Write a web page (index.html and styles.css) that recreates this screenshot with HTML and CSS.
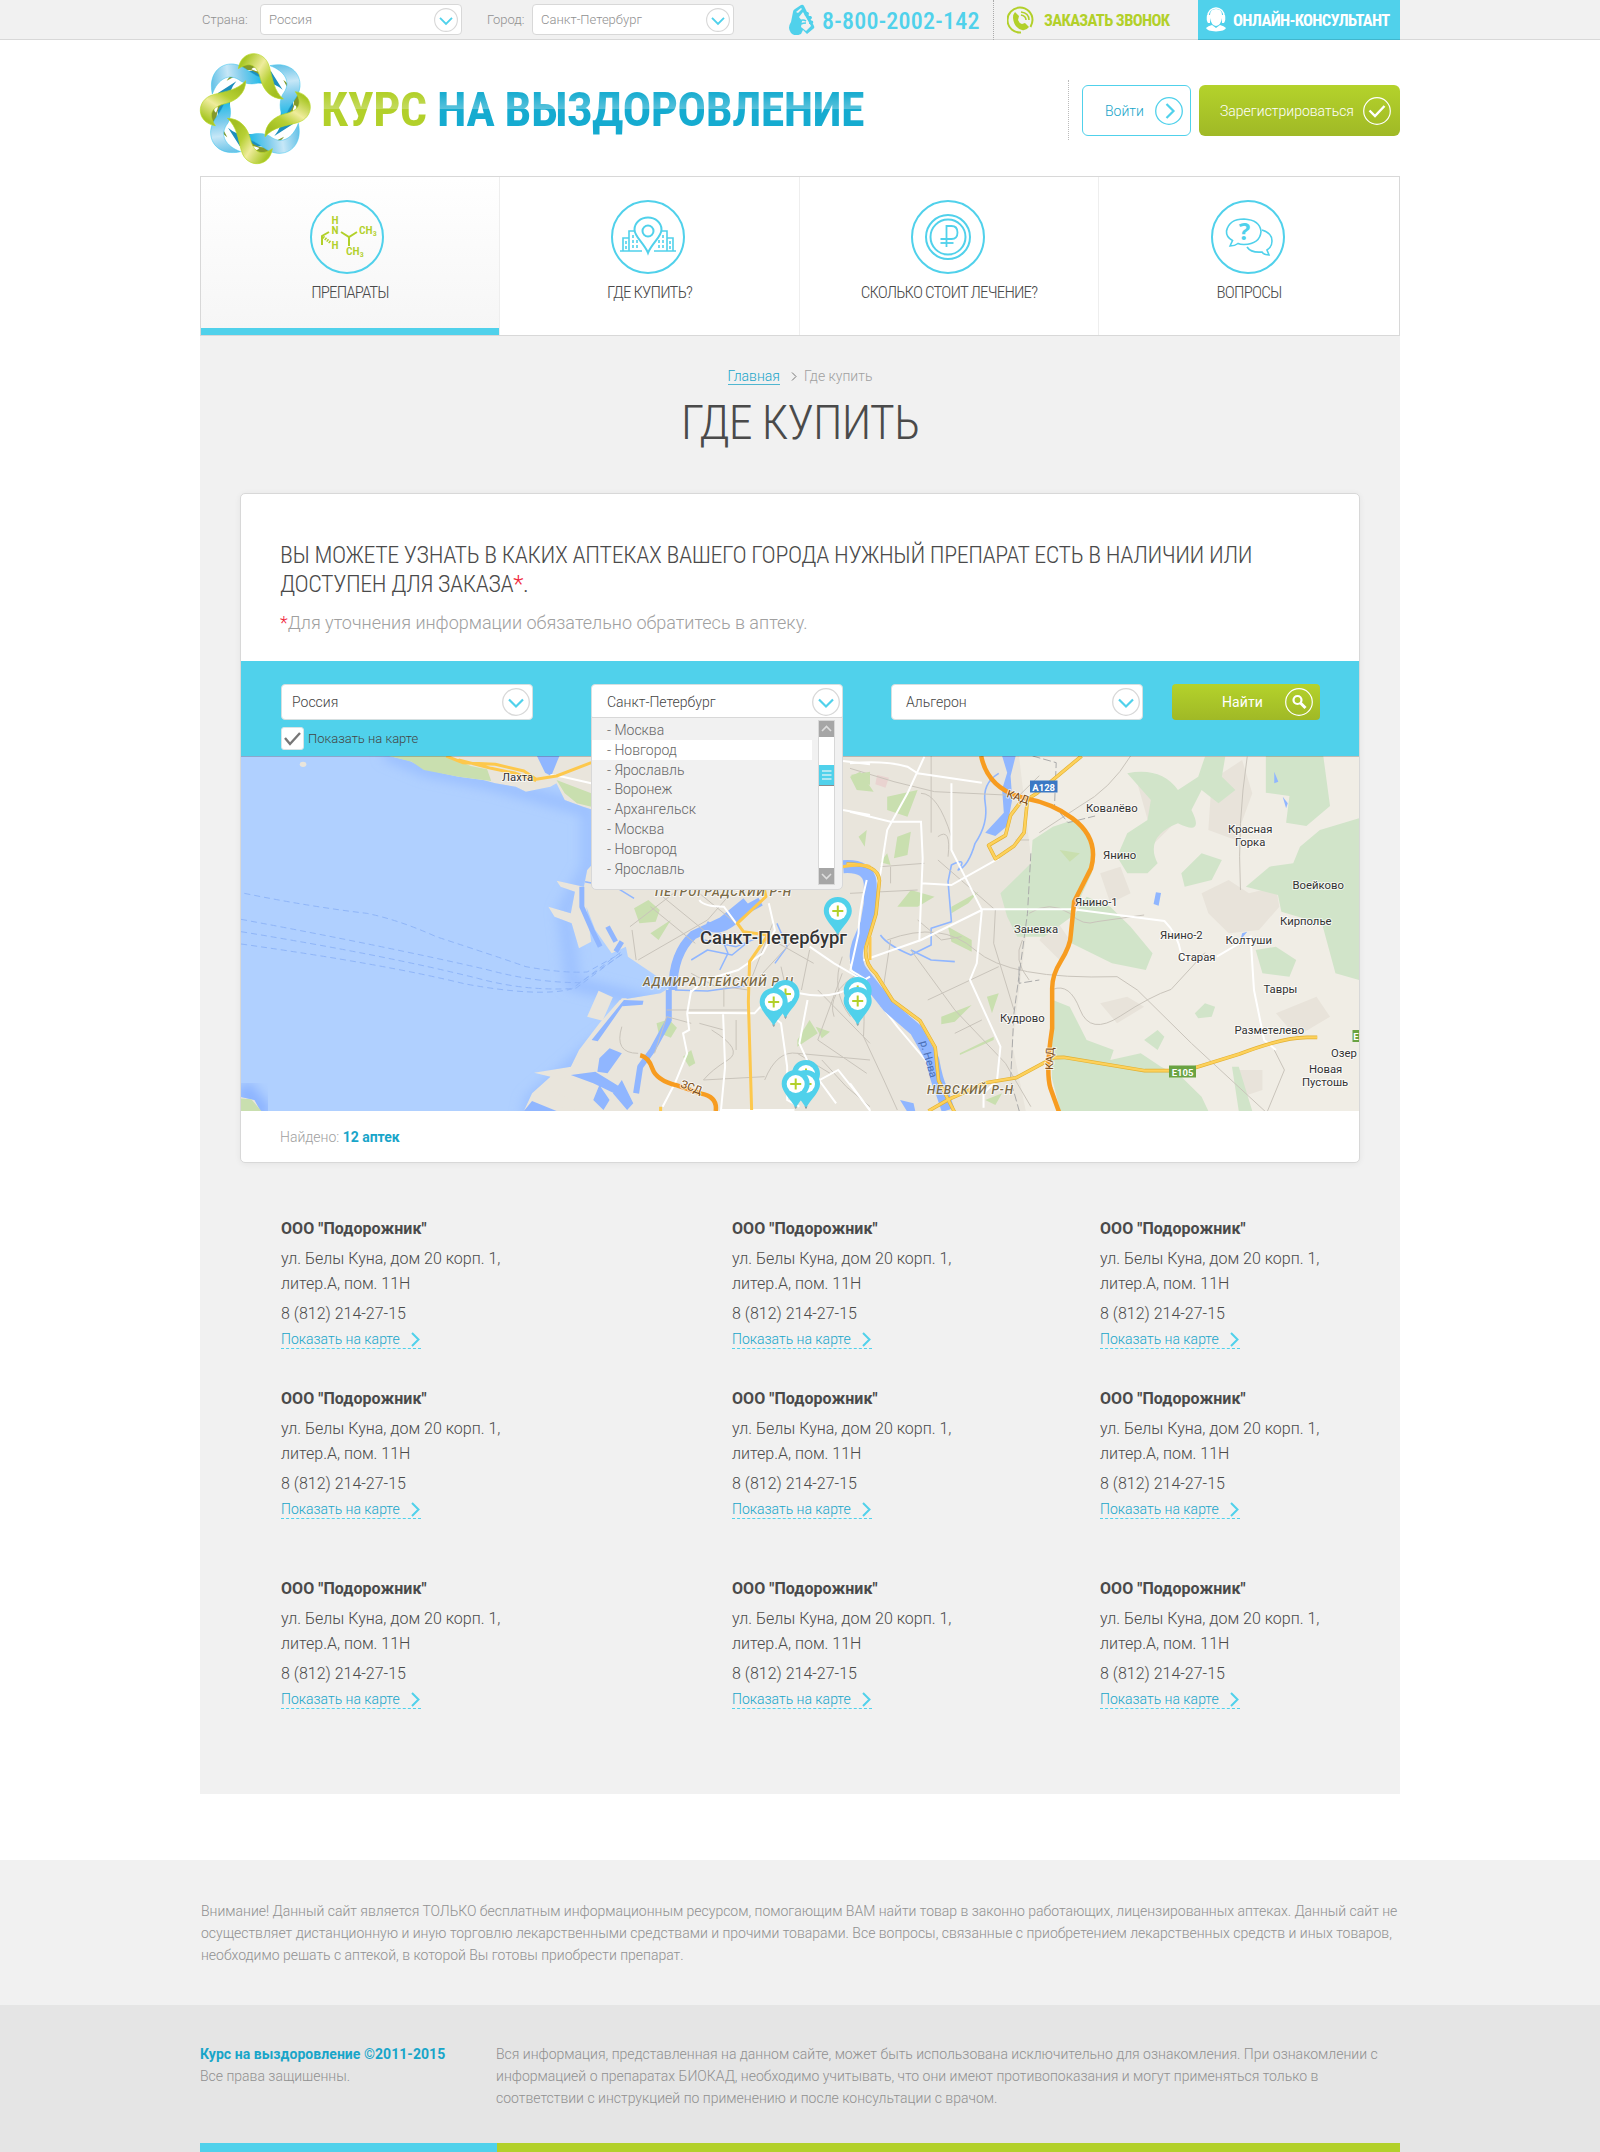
FILE: index.html
```html
<!DOCTYPE html>
<html lang="ru">
<head>
<meta charset="utf-8">
<title>Где купить — Курс на выздоровление</title>
<link rel="stylesheet" href="styles.css">
</head>
<body>
<svg class="defs" width="0" height="0" aria-hidden="true">
  <defs>
    <symbol id="i-down" viewBox="0 0 28 28"><circle cx="14" cy="14" r="13.3" fill="#fff" stroke="#d8d8d8" stroke-width="1.3"/><path d="M7 11.5l7 7 7-7" fill="none" stroke="#50d1eb" stroke-width="2.2"/></symbol>
    <symbol id="i-next" viewBox="0 0 9 15"><path d="M1 1l6.5 6.5L1 14" fill="none" stroke="#50d1eb" stroke-width="2"/></symbol>
    <symbol id="pin" viewBox="0 0 30 40" overflow="visible"><path d="M15 1C7 1 1 7 1 15c0 8 9 15 14 24 5-9 14-16 14-24C29 7 23 1 15 1z" fill="#50d1eb"/><path d="M14 37.500l1 2 1-2" fill="none" stroke="#8a9ea3"/><circle cx="15" cy="15" r="9" fill="#fff"/><path d="M9.500 15h11M15 9.500v11" stroke="#b2d02a" stroke-width="2"/></symbol>
  </defs>
</svg>

<header class="topbar">
  <div class="wrap topbar-row">
    <span class="top-label country">Страна:</span>
    <div class="top-select"><span>Россия</span><svg width="24" height="24"><use href="#i-down"/></svg></div>
    <span class="top-label city">Город:</span>
    <div class="top-select"><span>Санкт-Петербург</span><svg width="24" height="24"><use href="#i-down"/></svg></div>
    <a class="phone"><svg width="28" height="31" viewBox="0 0 28 31"><path d="M6 8q0-2 2-3l6-4q2-1 3 1l10 20q1 2-1 3l-6 5-4-4-2 4q-6 3-10-1-4-5 0-11z" fill="#50d1eb"/><path d="M9 8l5-4 1 1-4 4zM16 8l8 14-5 5-5-4 1-6-3-4z" fill="#f1f1f1"/><path d="M17 8l4 0q2 2 0 3l-3 1M20 12l4 0q2 2 0 3l-3 1M22 16l4 1q1 2-1 3l-3 0" fill="#50d1eb"/><path d="M13 17q3-2 6 0M14 20q2-1 5-1" fill="none" stroke="#50d1eb" stroke-width="1.600"/></svg><span>8-800-2002-142</span></a>
    <a class="callback"><svg width="27" height="28" viewBox="0 0 27 28"><path d="M14 26.500A12.500 12.500 0 1 1 25.500 14q0 3-2 7" fill="none" stroke="#b2d02a" stroke-width="2"/><path d="M8 6l4 4-1 4q1 3 4 4l3-1 4 4q-3 4-7 3Q7 22 6 12q0-4 2-6z" fill="#b2d02a"/><path d="M14 9q5 1 5 5M14 6q8 1 8 8" fill="none" stroke="#b2d02a" stroke-width="1.600"/></svg><span>ЗАКАЗАТЬ ЗВОНОК</span></a>
    <a class="online"><svg width="20" height="25" viewBox="0 0 20 25"><path d="M2 11V9a8 8 0 0 1 16 0v2" fill="none" stroke="#fff" stroke-width="1.500"/><path d="M4 8q0-6 6-6t6 6v3q-1 7-6 8-5-1-6-8z" fill="#fff"/><path d="M1 8h3v8H2q-2-3-1-8zM16 8h3q1 5-1 8h-2zM0 21q2-2 6-3l4 3 4-3q4 1 6 3-1 3-10 3.500Q1 24 0 21z" fill="#fff"/></svg><span>ОНЛАЙН-КОНСУЛЬТАНТ</span></a>
  </div>
</header>

<div class="wrap brand-row">
  <svg class="logo" width="120" height="120" viewBox="0 0 360 360">
    <defs>
      <linearGradient id="gl" gradientUnits="userSpaceOnUse" x1="130" y1="60" x2="240" y2="130"><stop offset="0" stop-color="#a9c726"/><stop offset=".4" stop-color="#efec9c"/><stop offset=".7" stop-color="#b7d034"/><stop offset="1" stop-color="#a3bf22"/></linearGradient>
      <linearGradient id="bl" gradientUnits="userSpaceOnUse" x1="50" y1="110" x2="190" y2="90"><stop offset="0" stop-color="#6cc4e8"/><stop offset=".35" stop-color="#c6e7f7"/><stop offset=".65" stop-color="#7dcbec"/><stop offset="1" stop-color="#2bbce8"/></linearGradient>
      <g id="dk"><path d="M150 70q35-4 75 0l35 55q-30-25-55-18-30-2-60-10z" fill="#1d8fbd"/><path d="M92 98q20-30 45-50 30-14 50 18l5 15q-40-30-68 0z" fill="#83992b"/><path d="M166 64q10-14 24 6-12 0-24-6z" fill="#fff"/><path d="M83 92q8-12 24-10-10 10-24 18z" fill="#fff"/></g>
      <path id="bu" d="M49 138C36 80 70 45 112 48 150 52 165 85 211 94 185 114 145 110 128 95 98 76 66 92 49 138z" fill="url(#bl)" stroke="#35c2ec" stroke-width="1.500"/>
      <path id="gu" d="M127 62C135 4 205 2 220 56 230 92 233 128 262 153 225 153 203 127 194 95 183 48 160 40 127 62z" fill="url(#gl)" stroke="#b6d822" stroke-width="2"/>
    </defs>
    <use href="#dk"/><use href="#dk" transform="rotate(90 178 182)"/><use href="#dk" transform="rotate(180 178 182)"/><use href="#dk" transform="rotate(270 178 182)"/>
    <use href="#bu"/><use href="#bu" transform="rotate(90 178 182)"/><use href="#bu" transform="rotate(180 178 182)"/><use href="#bu" transform="rotate(270 178 182)"/>
    <use href="#gu"/><use href="#gu" transform="rotate(90 178 182)"/><use href="#gu" transform="rotate(180 178 182)"/><use href="#gu" transform="rotate(270 178 182)"/>
  </svg>
  <div class="brand"><span class="brand-a">КУРС</span> <span class="brand-b">НА ВЫЗДОРОВЛЕНИЕ</span></div>
  <div class="auth">
    <a class="login"><span>Войти</span><svg width="28" height="28" viewBox="0 0 28 28"><circle cx="14" cy="14" r="13.300" fill="none" stroke="#50d1eb" stroke-width="1.300"/><path d="M11.500 7l7 7-7 7" fill="none" stroke="#50d1eb" stroke-width="2.200"/></svg></a>
    <a class="register"><span>Зарегистрироваться</span><svg width="28" height="28" viewBox="0 0 28 28"><circle cx="14" cy="14" r="13.300" fill="none" stroke="#fff" stroke-width="1.200"/><path d="M6.500 13.500l5.500 5.500 9.500-10" fill="none" stroke="#fff" stroke-width="2.400"/></svg></a>
  </div>
</div>

<nav class="wrap nav">
  <a class="nav-item active">
    <svg width="74" height="74" viewBox="0 0 74 74"><circle cx="37" cy="37" r="36" fill="none" stroke="#50d1eb" stroke-width="2"/><g stroke="#b2d02a" fill="none" stroke-width="2"><path d="M12 45V36l7-4M31 32l8 5 8-5M39 37v9"/><path d="M13 37l8 6" stroke-width="3" stroke-dasharray="1.500 1"/></g><g class="mol"><text x="21.500" y="24">H</text><text x="21.500" y="34">N</text><text x="21.500" y="49">H</text><text x="49" y="34">CH<tspan class="sub" dy="1.500">3</tspan></text><text x="36" y="55">CH<tspan class="sub" dy="1.500">3</tspan></text></g></svg>
    <span>ПРЕПАРАТЫ</span>
  </a>
  <a class="nav-item">
    <svg width="74" height="74" viewBox="0 0 74 74"><g fill="none" stroke="#50d1eb"><circle cx="37" cy="37" r="36" stroke-width="2"/><g stroke-width="1.600"><path d="M9 51h22M43 51h22M12 51V38h6v-7h6M18 38v13M62 51V38h-6v-7h-6M56 38v13"/><path d="M15 41v8M22 35v14M26 40v9M52 35v14M48 40v9M59 41v8" stroke-dasharray="3 2"/></g><path d="M37 53C33 43 23.500 37 23.500 29.500a13.500 12 0 0 1 27 0C50.500 37 41 43 37 53z" fill="#fff" stroke-width="2"/><circle cx="37" cy="31" r="5.500" stroke-width="2"/></g></svg>
    <span>ГДЕ КУПИТЬ?</span>
  </a>
  <a class="nav-item">
    <svg width="74" height="74" viewBox="0 0 74 74"><g fill="none" stroke="#50d1eb" stroke-width="2"><circle cx="37" cy="37" r="36"/><circle cx="37" cy="37" r="22"/><circle cx="37" cy="37" r="17.500"/><path d="M35.500 47V26h5q6 0 6 6.500t-6 6.500h-11" stroke-width="1.800"/><path d="M29.500 43h13" stroke-width="1.800"/></g></svg>
    <span>СКОЛЬКО СТОИТ ЛЕЧЕНИЕ?</span>
  </a>
  <a class="nav-item">
    <svg width="74" height="74" viewBox="0 0 74 74"><g fill="none" stroke="#50d1eb"><circle cx="37" cy="37" r="36" stroke-width="2"/><g stroke-width="1.600"><path d="M51 30q10 3 10 11 0 6-5 9l2 5q-5 0-7-3-11 1-15-5"/><path d="M19 46l2.500-5.500Q15 37 15.500 31 18 19 33 19q16 1 17 12.500Q49 44 33 44.500q-4 0-6-1-3 2.500-8 2.500z" fill="#fff"/></g></g><text class="qmark" x="33.500" y="40">?</text></svg>
    <span>ВОПРОСЫ</span>
  </a>
</nav>

<main class="wrap main">
  <div class="crumbs"><a>Главная</a><svg width="6" height="9" viewBox="0 0 6 9"><path d="M1 .5l4 4-4 4" fill="none" stroke="#777"/></svg><span>Где купить</span></div>
  <h1>ГДЕ КУПИТЬ</h1>

  <section class="panel">
    <div class="panel-head">
      <h2>ВЫ МОЖЕТЕ УЗНАТЬ В КАКИХ АПТЕКАХ ВАШЕГО ГОРОДА НУЖНЫЙ ПРЕПАРАТ ЕСТЬ В НАЛИЧИИ ИЛИ<br>ДОСТУПЕН ДЛЯ ЗАКАЗА<i>*</i>.</h2>
      <p><i>*</i>Для уточнения информации обязательно обратитесь в аптеку.</p>
    </div>
    <form class="filter">
      <div class="field f1">
        <div class="select"><span>Россия</span><svg width="28" height="28"><use href="#i-down"/></svg></div>
        <label class="check"><svg width="23" height="23" viewBox="0 0 23 23"><rect x=".5" y=".5" width="22" height="22" rx="2.500" fill="#fff" stroke="#d8e4e6"/><path d="M4 11l5 6L19 6" fill="none" stroke="#777" stroke-width="2.400"/></svg><span>Показать на карте</span></label>
      </div>
      <div class="field f2">
        <div class="select open"><span>Санкт-Петербург</span><svg width="28" height="28"><use href="#i-down"/></svg></div>
        <div class="dropdown">
          <ul><li>- Москва</li><li class="hover">- Новгород</li><li>- Ярославль</li><li>- Воронеж</li><li>- Архангельск</li><li>- Москва</li><li>- Новгород</li><li>- Ярославль</li></ul>
          <svg class="scroll" width="17" height="165" viewBox="0 0 17 165"><rect x=".5" y=".5" width="16" height="164" fill="#fff" stroke="#d8d8d8"/><path d="M1 1h15v16H1zM1 148h15v16H1z" fill="#a6a6a6"/><path d="M4 11l4.500-4.500L13 11M4 154l4.500 4.500L13 154" fill="none" stroke="#dedede" stroke-width="1.600"/><path d="M1 45h15v20H1z" fill="#50d1eb"/><path d="M1 65.500h15" stroke="#8b8b8b"/><path d="M4 51h9.500M4 55h9.500M4 59h9.500" stroke="#cdeef5" stroke-width="1.500"/></svg>
        </div>
      </div>
      <div class="field f3"><div class="select"><span>Альгерон</span><svg width="28" height="28"><use href="#i-down"/></svg></div></div>
      <a class="find"><span>Найти</span><svg width="28" height="28" viewBox="0 0 28 28"><circle cx="14" cy="14" r="13.300" fill="none" stroke="#fff" stroke-width="1.200"/><circle cx="12.500" cy="12" r="4" fill="none" stroke="#fff" stroke-width="2.200"/><path d="M15.500 15l5 5" stroke="#fff" stroke-width="3"/></svg></a>
    </form>

    <svg class="map" width="1118" height="355" viewBox="241 756 1118 355">
      <defs><filter id="soft" x="-10%" y="-10%" width="120%" height="120%"><feGaussianBlur stdDeviation="16"/></filter>
      <clipPath id="bay"><path d="M24 348H390l50 14 35 23 45 15 40 10 60 10 30 10 50 10 25 15 60-15 15-10 20 50 45 20 25 10v160l-15 20-8 50-67-18 10 18 35 15-10 65-55-20 15 30 42 20 18 75 30-20-12-105 22 70 40 70 35-20 5 30 60 50 45 40-25 20-100 20-50 70-50 80-20 50-90 18 40 12-45 50-20 53H75l-15-33-36-10z"/></clipPath></defs>
      <rect x="241" y="756" width="1118" height="355" fill="#e9e5dc"/>

      <!-- gulf and western shore -->
      <g class="ns" transform="translate(230 640) scale(.40816 .33333)">
        <g clip-path="url(#bay)"><rect y="340" width="1100" height="1080" fill="#b0d0ff"/>
          <path d="M380 340l100 50 160 40 240 80v170l-60 130 20 220 200 60-150 130-150 160-20 120" fill="none" stroke="#8bb3ff" stroke-width="14" stroke-opacity=".55" filter="url(#soft)"/>
          <path d="M27 1340l60 90" stroke="#8bb3ff" stroke-width="20" filter="url(#soft)"/></g>
        <path class="park" d="M390 348h140l60 30 40 10 10 35-80-13-85-20-30-25z"/>
        <path class="park" d="M800 420l85 40v40l-35-10-30-30zM24 1375l28 3 25 35H24zM990 805l35-25 28 30-10 35-40 5zM1045 1150l30-12 20 25-15 30-30-15z"/>
        <circle cx="179" cy="373" r="8" fill="#e9e5dc"/>
        <path d="M752 348h55l-20 60-15-10z" class="water"/>
        <!-- islands and docks -->
        <path class="land" d="M903 1052l35 20-25 70-38-12zM850 1255l110-180h12l-5 25-65 100-45 70-15-8zM960 1150l-30 60-35 55-12-5 60-110zM985 1230l-50 80-15-8 45-85zM795 1320l40-13 70 65-10 30-50-32zM785 1350l70 40 15 25-90-20z"/>
        <path class="water" d="M965 1080l48 2-2 12-50 5-60 105-15-4zM930 1225l30 15-35 60-25-5 5-40zM960 1320l28 70-15 20-35-50zM720 1413l20-30 60 30zM835 1305l60-10 80 60-25 10-60-35zM905 1335l25 45-15 30-25-30z"/>
        <path class="river" stroke-width="9" d="M1165 855q40 30 90-40l45-30M1085 1050q0-110 50-165l70-40 60-60"/>
        <path class="river" stroke-width="6" d="M1075 1050v90l-40 90-30 50-10 80"/>
        <path class="river" stroke-width="5" d="M925 860l20 45M862 740v60l25 70 20 50M960 905l-15 30"/>
        <path class="river" stroke-width="1.500" d="M1130 960l40-30 60 15 40-40M1160 900l80 20 60-30M1200 990l20-50-20-60M1090 1050l80 3 90-15M1340 850l25 70-30 50M870 725l80 20 40 30"/>
        <path class="ferry" d="M35 760q160 40 300 60 80 20 170 70 150 60 220 90 90 20 150 16l80-54M27 838q350 80 600 150 120 40 230 40l110-90M27 875q350 70 580 140 120 40 240 30l110-100M27 912q350 60 550 120 180 40 260 15l120-110"/>
      </g>

      <!-- city blocks, river bend -->
      <g class="ns" transform="translate(850 640) scale(.33806 .33333)">
        <path fill="#f0ede5" d="M500 348h1006v1065H520l-40-200 20-160 20-160 20-200z"/>
        <path class="block" d="M560 900l50-60 40 60-30 60zM1040 760l80-40 60 40 80-20 10 60-60 70-90 10-60-60zM1260 1120l120-50 40 60-100 60zM740 1090l80-20 50 30-80 50zM1140 1290h80v60l-60 20zM740 700l60-20 30 80-60 30zM1070 420l90-60 30 100-50 140-80-30zM850 430l100 60 10 60-60 60z"/>
        <path class="wood" d="M540 600l60-40 60-20 35 30 25 70-5 60-60 130-80 60h-80l-30-60-20-70 90-90zM820 400q100-20 150 50l60-40 20-60h60l-10 60 40 40-50 40-50-40-30 60q40 80-40 40-100 40-60 120l-30 30h-60l-30-50 30-70 60-40 10-60zM1230 348h170l20 150-70 60-60-10 10-80-70-10zM1390 570l116-35v350l-130-40-100-30-10-50-95-25 70-60 70-10 20-50zM980 700l60-60 60 20-30 60-80 20zM660 830l40-60 70 30 60 60 65 80-20 50-100-20-120-60zM600 1080l50 20 50 100 80 30-10 30 90-20 60 40 60 30 60 60 20 43H622l-25-100v-90zM870 1200l40-30 20 20-20 40zM1020 1120l30-30 30 10-10 30-40 5zM1130 1280h20l40 133h-40zM1200 930l60-10 60 40-20 50-80-10zM1380 790l126-30v260l-70-20z"/>
        <path class="park" d="M0 410l30-15 40 60-50-5zM110 470l90-20-30 80-60-20zM140 590l40-15-10 70-40 10zM180 750l70 20-50 30h-60zM290 860l70 40v35l-60-30zM300 800l80-45-30 35-50 30zM405 1070l35-10-20 60zM270 1130l90-35-50 50-40 8zM325 1240l100-50v10l-100 45zM400 1380l50-20-20 35zM110 640l10 35-30-8zM620 630l60 10-30 25z"/>
        <path fill="#e9d3d0" d="M80 405l35 8-10 30-30-10z"/>
        <path class="water" d="M450 348h40l-15 60 5 70-15 80-35 30-30-10 55-60-5-70 15-50zM905 757l15 2-7 38-15-5zM1255 395l12 30-12 5zM1280 470l15 20-5 15zM1160 880l15-5-20 25zM148 1380l40 10 5 23h-25zM1498 960l8 60z"/>
        <path class="river" stroke-width="1.600" d="M440 400q-50 30-40 90t-30 120q-20 70-50 80 30-40-20-15l-10 50 10 120-60 20v50l-60 30q-70-30-90-60M180 930l60 30 70 5"/>
        <g class="rd gray"><path d="M0 385l130 40 120 30 250 12 60-60M240 348v230M210 460q50 0 90 130M830 348q-60 100-150 150l-120 80M260 660l170 150-5 100 60 200M120 680v50M0 760l200-10M90 680l130-10M110 900q160-60 260 30t420 80l60 40 160 160 235 220M180 930l130 180 150 160 75 130M230 1080l210-100M200 840l70 60 60-10M0 1000q50 0 40 190l60 130 40 90M310 1180l80-40M120 900l-30 200M510 900q-30 60 20 120M530 820q60-40 120 0 40 40 80 25l140-20M1175 350q-30 200-20 400M490 600h40M260 590q40-30 30 60M600 1048q50-20 80 60t120 20 150-80l100-110M1255 1230l30 60-50 123"/></g>
        <g class="rd rail"><path d="M540 348l70 20-5 130 40 50 80-20M535 640l-10 180-40 300-10 200 55 200M500 980v50l60-10"/></g>
        <g class="rd white"><path d="M0 370q100-10 170 10l30 20 190 28M220 350l-50 110-60 110-20 130-20 60M0 515l120 30h90l5 110-10 250M300 430v200l40 80 50 100-15 160-20 50 90 200-10 100-40 40v43M210 730l90 5 140-80M390 808h270l270 35q40 40 50 100l20 20M1085 950l100-60 10 160 30 150 35 30M0 975l210-75 180-90M0 960l30 20M80 1080l60 80 100 120 30 120M0 1330l60 83"/></g>
        <path class="river" stroke-width="13" d="M-20 680q75-5 80 50v60l-10 60-25 60q-20 60 20 100l70 90 80 70 50 90q10 60 25 90l20 60"/>
        <g class="casing"><path stroke="#e2b030" stroke-width="3.600" d="M-10 672q95 0 97 50l-10 100-30 100q-5 50 30 80l50 80 80 60 45 80 10 100 50 100M232 1413l60-35 110-50 90-15 110-60 30-1 240 40h120l160-50q130-50 200-50h30M685 348l-130 110-30 20-10 100-30 40-55 38-20-40 50-30 15-60 30-40"/></g>
        <g class="casing"><path stroke="#fdd15b" stroke-width="2.400" d="M-10 672q95 0 97 50l-10 100-30 100q-5 50 30 80l50 80 80 60 45 80 10 100 50 100M232 1413l60-35 110-50 90-15 110-60 30-1 240 40h120l160-50q130-50 200-50h30M685 348l-130 110-30 20-10 100-30 40-55 38-20-40 50-30 15-60 30-40"/></g>
        <path class="kad" d="M388 348q20 100 130 127 80 15 140 60 80 60 55 150l-50 100-10 100q0 30-30 80-25 40-25 80v120q-20 130-5 180l25 70"/>
      </g>

      <!-- central districts -->
      <g class="ns" transform="translate(230 640) scale(.40816 .33333)">
        <path class="park" d="M1520 405l48-10v40zM1505 600l10 30M1540 590l20-20-5 50zM1150 1150l25-10M1110 1250l20-20 10 40-15 10zM1390 1200l30-60 20 40-50 40zM1435 1160l35 15-20 20zM1030 880l50-40-30 60zM1105 850l10 20z"/>
        <g class="rd gray"><path d="M980 860l160-150M1000 960l170-120 50-70M1060 770l120 120M1030 800l110 110M1110 720l130 130M985 870l10 90M1040 1240l30-110 60 20M1150 1150l60 20M1180 1170q80 60 40 90t-60 60l150-10M1310 1320q30-90 80-80l178 20M1440 1050q80 100 128 160M1500 1000l-60 200 120 100M1330 850l-60 190M1380 900l-90 120M1300 880l130 90M1210 1100v-60l60 10M1070 1110h200M1240 1140v90M1450 1260l60 80 58 60M1390 1240l80 60M1350 980l20 110M1420 930l-20 120M960 1160q-20 80 40 80M1130 1000l60 40M1500 950q-30 100 20 180M1540 1000q-80 60-60 130"/></g>
        <g class="rd white"><path d="M785 405l30 5 70 20M1502 510l66 15M1502 363l66 10M1130 1050l-10 70 5 50-15 10 10 60-30 90-30 70M1120 1118l165 2 15-20M1208 1120l5 160-10 130h180M1300 1100l50 50 15 130v100l30 20M1415 1080l-20 130 30 80 60 100M1415 1340l75-50 78 120M1395 1060q80 20 130-20l43-30M1320 790l15 80-30 70-60 50-80 30-35 35M1420 920l60 50 70 50M1560 720q-20 100-20 160l-20 110 40 30M1150 780q10 20 60 20l30 50"/></g>
        <g class="casing"><path stroke="#fdc84c" stroke-width="3" d="M530 348l40 20 80 5 70 20 30 25 50-10 85-40M560 360l80 25 60 15 50 22M1305 720l8 50-70 80 15 25 60 10-45 80-3 120 8 325M1568 890v70M1055 1400v13M1500 680q50-10 68 0"/></g>
        <path class="kad" stroke-width="5" d="M1005 1246q20 5 30 40t60 50l60 25q40 10 35 52"/>
      </g>

      <g class="labels">
        <text x="502" y="781">Лахта</text><text x="1086" y="812">Ковалёво</text><text x="1228" y="833">Красная</text><text x="1235" y="846">Горка</text><text x="1103" y="859">Янино</text><text x="1075" y="906">Янино-1</text><text x="1292.500" y="889">Воейково</text><text x="1280" y="925">Кирполье</text><text x="1014" y="933">Заневка</text><text x="1160" y="939">Янино-2</text><text x="1225.500" y="944">Колтуши</text><text x="1178" y="961">Старая</text><text x="1263.500" y="993">Тавры</text><text x="1000" y="1022">Кудрово</text><text x="1234.500" y="1034">Разметелево</text><text x="1331" y="1057">Озер</text><text x="1309" y="1073">Новая</text><text x="1302" y="1086">Пустошь</text>
        <text class="cityname" x="700" y="944" textLength="147" lengthAdjust="spacingAndGlyphs">Санкт-Петербург</text>
        <g class="district"><text x="643" y="986" textLength="150">АДМИРАЛТЕЙСКИЙ Р-Н</text><text x="655" y="896" textLength="136">ПЕТРОГРАДСКИЙ Р-Н</text><text x="927" y="1094" textLength="86">НЕВСКИЙ Р-Н</text></g>
        <g class="roadname"><text transform="translate(680 1087) rotate(20)">ЗСД</text><text transform="translate(1006 797) rotate(18)">КАД</text><text transform="translate(1053 1070) rotate(-88)">КАД</text></g>
        <text class="rivername" transform="translate(920 1042) rotate(74)">р. Нева</text>
      </g>
      <g class="shield"><rect x="1030" y="780.500" width="27.500" height="12" fill="#3a78c4"/><text x="1043.700" y="790.500">A128</text><rect x="1169" y="1065.500" width="27" height="12" fill="#6aa342"/><text x="1182.500" y="1075.500">E105</text><rect x="1352.500" y="1030" width="27" height="12" fill="#6aa342"/><text x="1356" y="1040">E</text></g>
      <g><use href="#pin" x="822.800" y="896" width="30" height="40"/><use href="#pin" x="770.500" y="979" width="30" height="40"/><use href="#pin" x="758.700" y="987" width="30" height="40"/><use href="#pin" x="842.700" y="976" width="30" height="40"/><use href="#pin" x="842.700" y="986" width="30" height="40"/><use href="#pin" x="791" y="1059" width="30" height="40"/><use href="#pin" x="791" y="1069" width="30" height="40"/><use href="#pin" x="780.700" y="1069" width="30" height="40"/></g>
      <path d="M241 756.500h1118" stroke="#000" stroke-opacity=".2"/>
    </svg>
    <p class="found">Найдено: <b>12 аптек</b></p>
  </section>

  <section class="shops">
    <article><h3>ООО "Подорожник"</h3><p>ул. Белы Куна, дом 20 корп. 1,<br>литер.А, пом. 11Н</p><p class="tel">8 (812) 214-27-15</p><a>Показать на карте<svg width="9" height="15"><use href="#i-next"/></svg></a></article>
    <article><h3>ООО "Подорожник"</h3><p>ул. Белы Куна, дом 20 корп. 1,<br>литер.А, пом. 11Н</p><p class="tel">8 (812) 214-27-15</p><a>Показать на карте<svg width="9" height="15"><use href="#i-next"/></svg></a></article>
    <article><h3>ООО "Подорожник"</h3><p>ул. Белы Куна, дом 20 корп. 1,<br>литер.А, пом. 11Н</p><p class="tel">8 (812) 214-27-15</p><a>Показать на карте<svg width="9" height="15"><use href="#i-next"/></svg></a></article>
    <article><h3>ООО "Подорожник"</h3><p>ул. Белы Куна, дом 20 корп. 1,<br>литер.А, пом. 11Н</p><p class="tel">8 (812) 214-27-15</p><a>Показать на карте<svg width="9" height="15"><use href="#i-next"/></svg></a></article>
    <article><h3>ООО "Подорожник"</h3><p>ул. Белы Куна, дом 20 корп. 1,<br>литер.А, пом. 11Н</p><p class="tel">8 (812) 214-27-15</p><a>Показать на карте<svg width="9" height="15"><use href="#i-next"/></svg></a></article>
    <article><h3>ООО "Подорожник"</h3><p>ул. Белы Куна, дом 20 корп. 1,<br>литер.А, пом. 11Н</p><p class="tel">8 (812) 214-27-15</p><a>Показать на карте<svg width="9" height="15"><use href="#i-next"/></svg></a></article>
    <article><h3>ООО "Подорожник"</h3><p>ул. Белы Куна, дом 20 корп. 1,<br>литер.А, пом. 11Н</p><p class="tel">8 (812) 214-27-15</p><a>Показать на карте<svg width="9" height="15"><use href="#i-next"/></svg></a></article>
    <article><h3>ООО "Подорожник"</h3><p>ул. Белы Куна, дом 20 корп. 1,<br>литер.А, пом. 11Н</p><p class="tel">8 (812) 214-27-15</p><a>Показать на карте<svg width="9" height="15"><use href="#i-next"/></svg></a></article>
    <article><h3>ООО "Подорожник"</h3><p>ул. Белы Куна, дом 20 корп. 1,<br>литер.А, пом. 11Н</p><p class="tel">8 (812) 214-27-15</p><a>Показать на карте<svg width="9" height="15"><use href="#i-next"/></svg></a></article>
  </section>
</main>

<section class="notice"><p class="wrap">Внимание! Данный сайт является ТОЛЬКО бесплатным информационным ресурсом, помогающим ВАМ найти товар в законно работающих, лицензированных аптеках. Данный сайт не<br>осуществляет дистанционную и иную торговлю лекарственными средствами и прочими товарами. Все вопросы, связанные с приобретением лекарственных средств и иных товаров,<br>необходимо решать с аптекой, в которой Вы готовы приобрести препарат.</p></section>
<footer class="footer">
  <div class="wrap foot-row">
    <p class="copy"><b>Курс на выздоровление ©2011-2015</b><br>Все права защишенны.</p>
    <p class="legal">Вся информация, представленная на данном сайте, может быть использована исключительно для ознакомления. При ознакомлении с<br>информацией о препаратах БИОКАД, необходимо учитывать, что они имеют противопоказания и могут применяться только в<br>соответствии с инструкцией по применению и после консультации с врачом.</p>
  </div>
  <div class="wrap stripe"><span></span><span></span></div>
</footer>
</body>
</html>
```
FILE: styles.css
```css
* { box-sizing: border-box; }
body { margin: 0; background: #fff; color: #4a4a4a; font: 300 14px/22px Roboto, "Open Sans", sans-serif; }
h1, h2, h3, p, ul { margin: 0; padding: 0; font-weight: 300; list-style: none; }
b { font-weight: 700; }
i { font-style: normal; color: #f0283c; }
svg { display: block; flex: none; }
.defs { position: absolute; }
.wrap { width: 1200px; margin: 0 auto; }

.topbar { height: 40px; background: #f1f1f1; border-bottom: 1px solid #d8d8d8; }
.topbar-row { display: flex; align-items: flex-start; height: 40px; font-size: 13px; color: #909090; white-space: nowrap; }
.top-label { line-height: 40px; padding-left: 2px; width: 60px; }
.top-label.city { width: 70px; padding-left: 25px; }
.top-select { width: 202px; height: 31px; margin-top: 4px; padding: 1px 3px 0 8px; background: #fff; border: 1px solid #d8d8d8; border-radius: 4px; display: flex; align-items: center; justify-content: space-between; }
.phone, .callback, .online span { font-family: "Roboto Condensed", Roboto, sans-serif; font-stretch: 75%; }
.phone { display: flex; gap: 7px; margin-left: 53px; width: 207px; height: 40px; padding-top: 4px; color: #50d1eb; font-size: 24px; font-weight: 500; line-height: 34px; letter-spacing: .25px; border-right: 1px dotted #aaa; }
.callback { display: flex; gap: 10px; margin-left: 13px; width: 191px; padding-top: 6px; color: #b2d02a; font-size: 16.5px; font-weight: 700; line-height: 29px; letter-spacing: -.65px; }
.online { display: flex; gap: 7px; width: 202px; height: 40px; padding: 7px 8px; background: #50d1eb; border-bottom: 1px solid #41b6cd; color: #fff; font-size: 16.5px; font-weight: 700; line-height: 27px; letter-spacing: -.68px; }

.brand-row { height: 136px; display: flex; }
.logo { margin: 8px 0 0 -4px; }
.brand { margin: 38px 0 0 5px; width: 740px; font: 700 48px/64px "Roboto Condensed", Roboto, sans-serif; font-stretch: 75%; letter-spacing: -.65px; white-space: nowrap; }
.brand-a, .brand-b { background: linear-gradient(#b2d02a 22%, #c5db62 50%, #b2d02a 50%); -webkit-background-clip: text; background-clip: text; color: transparent; }
.brand-b { background-image: linear-gradient(#1aadd0 22%, #5dc3dc 50%, #15abd0 50%); }
.auth { display: flex; gap: 8px; height: 60px; margin-top: 40px; padding: 5px 0 0 13px; border-left: 1px dotted #bbb; margin-left: auto; }
.login, .register { display: flex; align-items: center; justify-content: space-between; height: 51px; border-radius: 6px; }
.login { width: 109px; padding: 0 7px 0 22px; border: 1px solid #50d1eb; color: #18a5c9; }
.register { width: 201px; padding: 0 9px 0 21px; background: linear-gradient(#b4d22b, #a0b926); color: #fff; }

.nav { display: grid; grid-template-columns: 298px 300px 299px 1fr; height: 160px; border: 1px solid #d8d8d8; }
.nav-item { display: flex; flex-direction: column; align-items: center; padding-top: 23px; border-left: 1px solid #eee; font: 300 17px/20px "Roboto Condensed", Roboto, sans-serif; font-stretch: 75%; letter-spacing: -.85px; white-space: nowrap; }
.nav-item:first-child { border-left: 0; }
.nav-item svg { margin-right: 3px; letter-spacing: 0; }
.nav-item:first-child svg { margin-right: 6px; }
.nav-item span { margin-top: 8px; }
.nav-item.active { background: linear-gradient(#fff, #f6f6f6); border-bottom: 7px solid #50d1eb; }
.mol { fill: #b2d02a; font-weight: 600; font-size: 11.5px; }
.mol .sub { font-size: 8px; }
.qmark { fill: #50d1eb; font: 700 24px "Open Sans", sans-serif; text-anchor: middle; }

.main { height: 1458px; background: #f1f1f1; }
.crumbs { display: flex; align-items: center; justify-content: center; padding-top: 29px; color: #a0a0a0; font-size: 14px; line-height: 22px; }
.crumbs a { color: #18a5c9; border-bottom: 1px solid #50b6d0; padding-top: 1px; line-height: 15px; }
.crumbs svg { margin: 0 7px 0 11px; }
h1 { margin-top: 4px; text-align: center; font: 300 48px/64px "Roboto Condensed", Roboto, sans-serif; font-stretch: 75%; letter-spacing: -.85px; }
.panel { width: 1120px; margin: 38px 0 0 40px; background: #fff; border: 1px solid #d8d8d8; border-radius: 5px; box-shadow: 0 1px 6px rgba(0,0,0,.06); }
.panel-head { height: 167px; padding: 47px 0 0 39px; white-space: nowrap; }
h2 { font: 300 24px/29px "Roboto Condensed", Roboto, sans-serif; font-stretch: 75%; letter-spacing: -.4px; }
.panel-head p { margin-top: 12px; color: #a0a0a0; font-size: 18px; line-height: 24px; }
.filter { display: flex; height: 95px; padding: 23px 0 0 40px; background: #50d1eb; color: #444; }
.field { position: relative; width: 252px; }
.f2 { margin-left: 58px; }
.f3 { margin-left: 48px; }
.select { height: 36px; padding: 0 2px 0 10px; background: #fff; border: 1px solid #d5dfe0; border-radius: 4px; display: flex; align-items: center; justify-content: space-between; }
.f2 .select { padding-left: 15px; padding-right: 2px; }
.f3 .select { padding-left: 14px; padding-right: 2px; }
.check { display: flex; align-items: center; gap: 4px; margin-top: 7px; font-size: 13px; }
.dropdown { position: absolute; z-index: 2; left: 0; top: 33px; width: 252px; height: 173px; display: flex; background: #f1f1f1; border: 1px solid #d8d8d8; border-radius: 0 0 5px 5px; color: #666; }
.dropdown ul { width: 220px; padding-top: 2px; }
.dropdown li { height: 19.8px; line-height: 20px; padding-left: 15px; }
.dropdown .hover { background: #fff; }
.scroll { margin: 2px 0 0 6px; }
.find { display: flex; align-items: center; justify-content: flex-end; gap: 22px; width: 148px; height: 36px; margin-left: 29px; padding-right: 7px; border-radius: 4px; background: linear-gradient(#b4d22b, #a0b926); color: #fff; font-weight: 400; letter-spacing: .1px; }
.found { height: 51px; padding-left: 39px; line-height: 52px; color: #a0a0a0; }
.found b { color: #18a5c9; }

.ns path { vector-effect: non-scaling-stroke; }
.land { fill: #e9e5dc; }
.park { fill: #c9dfaf; }
.wood { fill: #d1e4c9; }
.block { fill: #e8e3da; }
.water { fill: #90b6ff; }
.river { fill: none; stroke: #90b6ff; stroke-linejoin: round; }
.ferry { fill: none; stroke: #8fb5f8; stroke-width: 1; stroke-dasharray: 6 4; }
.rd, .casing { fill: none; }
.gray { stroke: #c9c4bb; stroke-width: 1; }
.rail { stroke: #aaa; stroke-dasharray: 8 3; }
.white { stroke: #fff; stroke-width: 2; }
.casing { stroke-linejoin: round; }
.kad { fill: none; stroke: #f79c20; stroke-width: 4.5; }
.labels { font: 400 11.3px Roboto, sans-serif; fill: #333; stroke: #fff; stroke-opacity: .7; stroke-width: 2px; stroke-linejoin: round; paint-order: stroke; }
.labels .cityname { font-size: 18px; font-weight: 500; }
.district { font-size: 12px; font-weight: 500; font-style: italic; fill: #7a6a45; }
.roadname { font-size: 11px; fill: #7a4a10; }
.labels .rivername { fill: #4a6fb5; font-size: 11px; stroke: none; }
.shield { font: 700 9.5px Roboto, sans-serif; fill: #fff; text-anchor: middle; }

.shops { display: grid; grid-template-columns: 451px 368px 1fr; grid-template-rows: 170px 190px 170px; padding: 53px 0 0 81px; white-space: nowrap; }
.shops article { font-size: 16px; line-height: 25px; }
.shops h3 { font-weight: 700; font-size: 16px; line-height: 25px; margin-bottom: 5px; letter-spacing: .05px; }
.shops .tel { margin-top: 5px; }
.shops a { display: flex; align-items: center; width: 140px; height: 23px; padding: 5px 1px 0 0; font-size: 14px; color: #18a5c9; justify-content: space-between; border-bottom: 1px dashed #50d1eb; }

.notice { height: 145px; margin-top: 66px; padding-top: 40px; background: #f1f1f1; color: #909090; white-space: nowrap; }
.notice p { padding-left: 1px; letter-spacing: -.007px; }
.footer { height: 147px; background: #e5e5e5; color: #909090; }
.foot-row { display: flex; height: 138px; padding-top: 38px; white-space: nowrap; }
.copy { width: 296px; }
.copy b { color: #18a5c9; letter-spacing: .05px; }
.stripe { display: flex; height: 9px; }
.stripe span { flex: 1; background: #b2d02a; }
.stripe span:first-child { flex: 0 0 297px; background: #50d1eb; }
```
